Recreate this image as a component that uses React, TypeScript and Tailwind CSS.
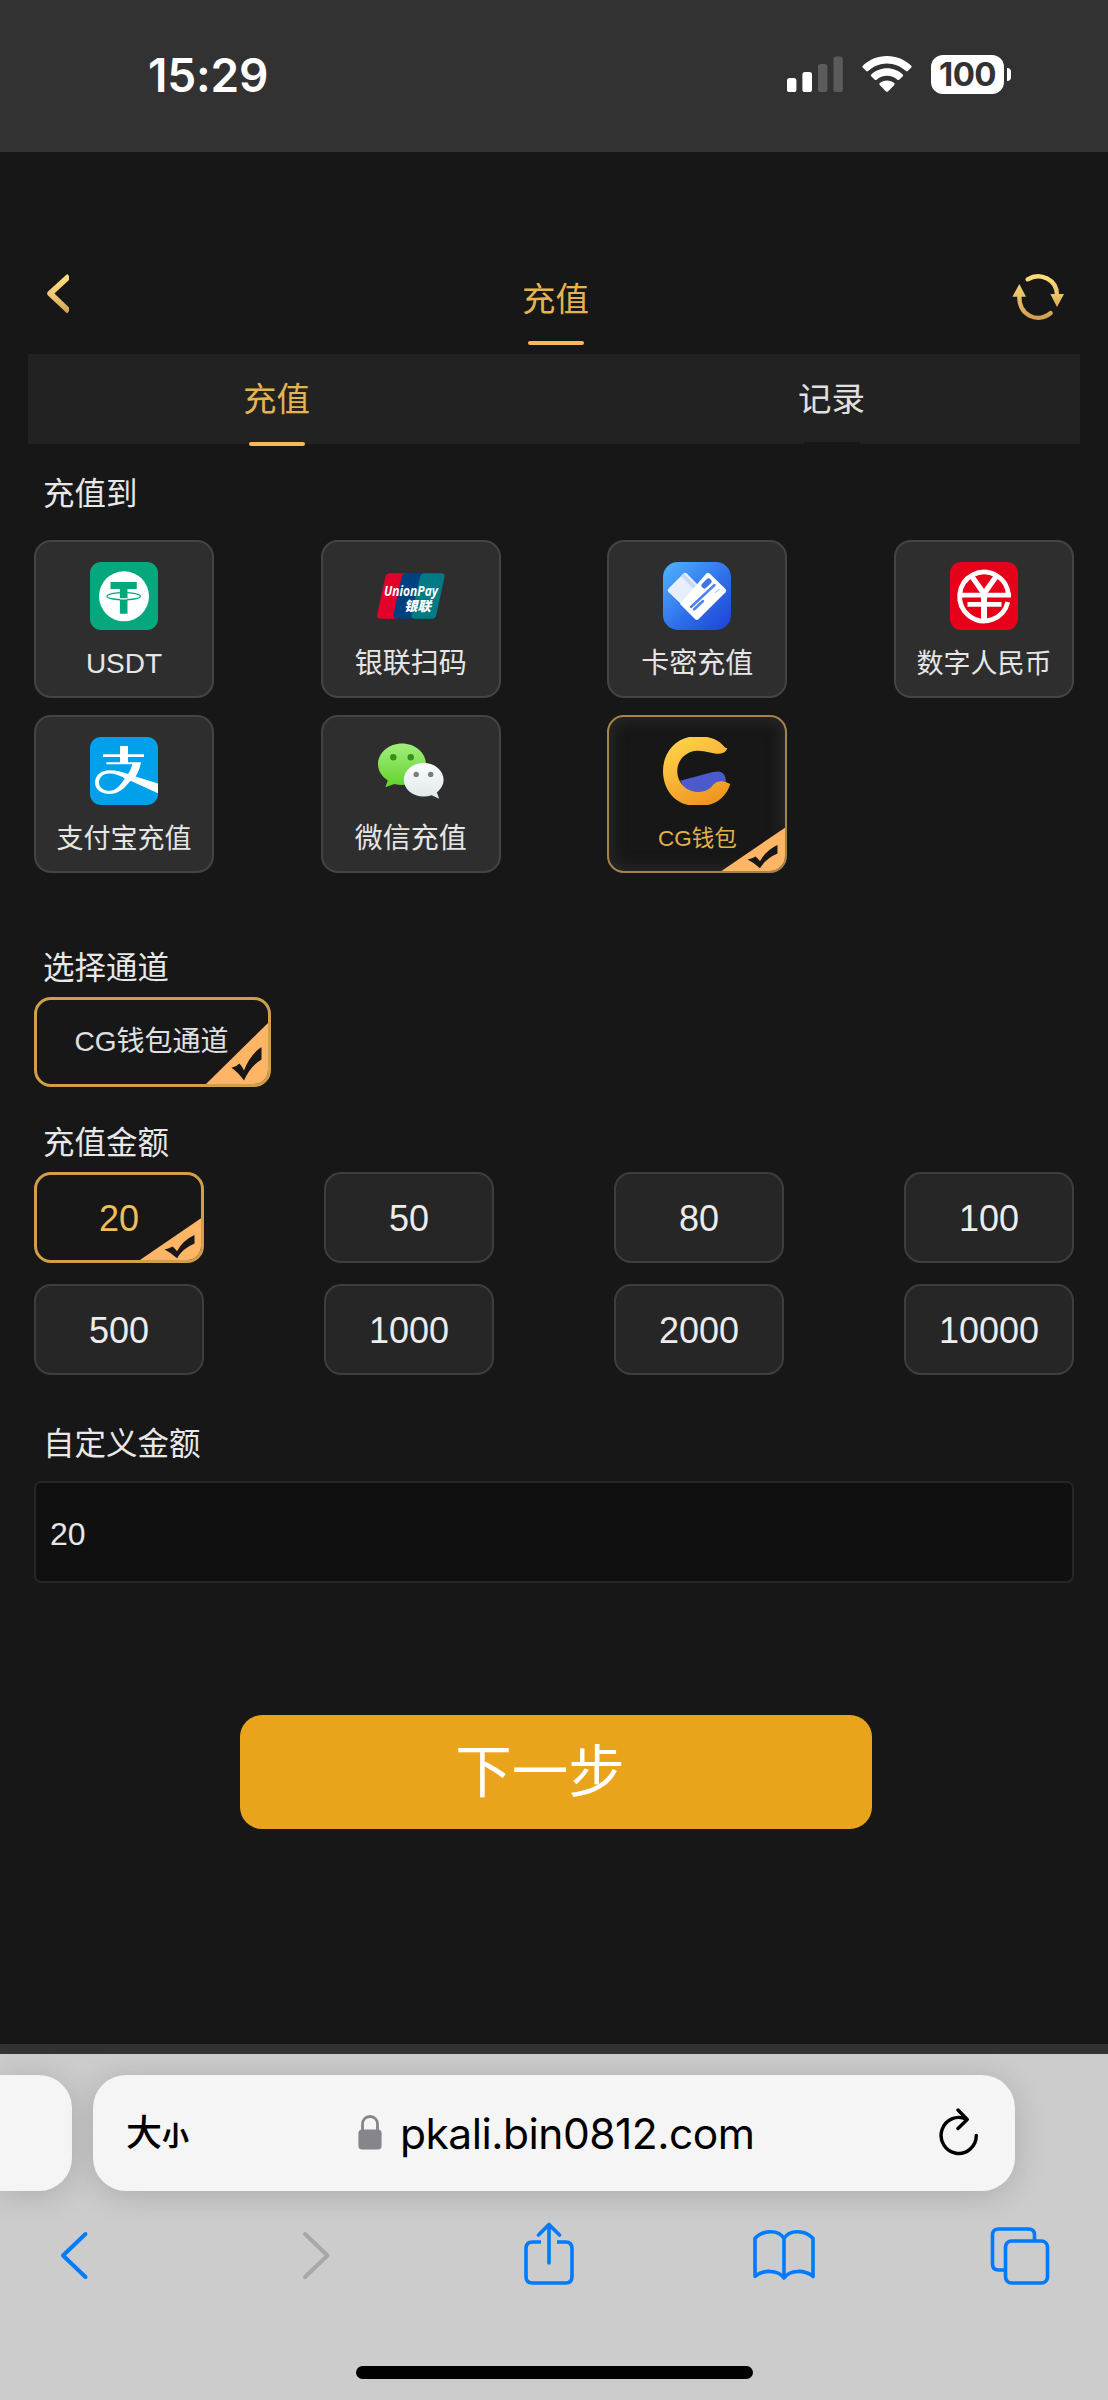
import type { ReactNode } from "react";

function SignalIcon() {
  return (
    <svg width="56" height="36" viewBox="0 0 56 36">
      <rect x="0" y="22" width="9.4" height="14" rx="2.6" fill="#fff" />
      <rect x="15.4" y="16" width="9.6" height="20" rx="2.6" fill="#fff" />
      <rect x="31" y="8" width="9.4" height="28" rx="2.6" fill="#5b5b5b" />
      <rect x="46.4" y="0.5" width="9.4" height="35.5" rx="2.6" fill="#5b5b5b" />
    </svg>
  );
}

function WifiIcon() {
  return (
    <svg width="50" height="36" viewBox="0 0 50 36" fill="#fff">
      <path d="M25 0C34.500 0 43 3.700 49.200 9.700c.6.6.6 1.200.1 1.800l-3.500 3.500c-.6.6-1.300.6-1.900 0C38.800 10.200 32.200 7.400 25 7.400S11.200 10.200 6.100 15c-.6.6-1.300.6-1.900 0L.7 11.500c-.5-.6-.5-1.200.1-1.800C7 3.700 15.500 0 25 0z" />
      <path d="M25 12.300c6 0 11.500 2.300 15.700 6.100.6.600.6 1.300.1 1.800l-3.600 3.500c-.6.6-1.200.5-1.800 0-2.800-2.500-6.400-4-10.400-4s-7.600 1.500-10.400 4c-.6.5-1.200.6-1.800 0l-3.600-3.500c-.5-.5-.5-1.200.1-1.800C13.500 14.600 19 12.300 25 12.300z" />
      <path d="M25 24.500c2.800 0 5.300 1 7.200 2.600.6.500.6 1.200.1 1.800l-6.300 6.500c-.6.600-1.400.6-2 0l-6.300-6.500c-.5-.6-.5-1.300.1-1.800 1.900-1.600 4.400-2.600 7.200-2.600z" />
    </svg>
  );
}

function StatusBar() {
  return (
    <div className="flex h-[152px] justify-between bg-[#323232] pl-[148px] pr-[97px] font-['Inter',sans-serif]">
      <span className="pt-[45px] text-[46px] font-semibold leading-[60px] tracking-[-0.2px] text-white">15:29</span>
      <div className="flex pt-[55px]">
        <div className="pt-[1px]"><SignalIcon /></div>
        <div className="ml-[19px] pt-[1px]"><WifiIcon /></div>
        <div className="ml-[19px] flex h-[39px] w-[73px] items-center justify-center rounded-[12px] bg-white text-[33px] font-bold tracking-[-0.6px] text-[#323232]">100</div>
        <div className="ml-[3px] mt-[13px] h-[13px] w-[4px] rounded-r-full bg-white" />
      </div>
    </div>
  );
}

function GoldGradient({ id }: { id: string }) {
  return (
    <linearGradient id={id} x1="0" y1="0" x2="0" y2="1">
      <stop offset="0" stopColor="#ffe07c" />
      <stop offset="0.55" stopColor="#efc774" />
      <stop offset="1" stopColor="#d19f4d" />
    </linearGradient>
  );
}

function BackIcon() {
  return (
    <svg width="24" height="40" viewBox="0 0 24 40">
      <defs><GoldGradient id="back" /></defs>
      <path d="M20.200 0 22 2v4L7.400 19.500 22 33.500V37l-1.800 2.500L1 21.400c-1.200-1.200-1.200-2.600 0-3.800z" fill="url(#back)" />
    </svg>
  );
}

function RefreshIcon() {
  return (
    <svg width="52" height="48" viewBox="36 32 156 144">
      <defs>
        <linearGradient id="refresh" gradientUnits="userSpaceOnUse" x1="0" y1="34" x2="0" y2="176">
          <stop offset="0" stopColor="#ffe07c" />
          <stop offset="1" stopColor="#cf9c4d" />
        </linearGradient>
      </defs>
      <g fill="none" stroke="url(#refresh)" strokeWidth="13" strokeLinecap="round">
        <path d="M83 51C120 29 172 50 171 100" />
        <path d="M58 100C56 160 113 184 152 152" />
      </g>
      <path d="M151 95h41l-21 39zM37 103h41L58 65z" fill="url(#refresh)" />
    </svg>
  );
}

function UsdtIcon() {
  return (
    <svg width="68" height="68" viewBox="0 0 68 68">
      <rect width="68" height="68" rx="11" fill="#05a77c" />
      <circle cx="34" cy="34.300" r="25" fill="#fff" />
      <path d="M20.500 20h26.300v7H37.500v24.700h-7.600V27h-9.400z" fill="#05a77c" />
      <ellipse cx="33.700" cy="34.200" rx="16.700" ry="3.600" fill="none" stroke="#05a77c" strokeWidth="1.300" />
      <path d="M29.900 36.600q3.800.5 7.600 0" stroke="#fff" strokeWidth="1.200" fill="none" />
    </svg>
  );
}

function UnionPayIcon() {
  return (
    <svg width="68" height="68" viewBox="0 0 68 68" fontFamily="'Open Sans','Noto Sans CJK SC',sans-serif">
      <path d="M12.500 11.300H30L20 56.700H3.200C1 56.700-.3 55 .2 52.800L8.300 15c.5-2.300 2-3.700 4.200-3.700z" fill="#e3002b" />
      <path d="M28.500 11.300H50L40 56.700H19.500c-2.300 0-3.600-1.600-3.100-3.900L24.500 15c.5-2.300 1.800-3.700 4-3.700z" fill="#00407f" />
      <path d="M47.500 11.300h17c2.300 0 3.500 1.500 3 3.700l-8.200 38c-.5 2.300-2 3.700-4.200 3.700H37.500c-2.300 0-3.600-1.600-3.100-3.900L43 15c.5-2.300 2.200-3.700 4.500-3.700z" fill="#007b85" />
      <text x="7" y="33.500" fontSize="14" fontWeight="700" fontStyle="italic" fill="#fff" textLength="54" lengthAdjust="spacingAndGlyphs">UnionPay</text>
      <text x="27" y="48.500" fontSize="13.500" fontWeight="900" fontStyle="italic" fill="#fff" textLength="27" lengthAdjust="spacingAndGlyphs">银联</text>
    </svg>
  );
}

function CardIcon() {
  return (
    <svg width="68" height="68" viewBox="0 0 68 68">
      <defs>
        <linearGradient id="card" x1="0" y1="0" x2="1" y2="1">
          <stop offset="0" stopColor="#52b4ff" />
          <stop offset="0.550" stopColor="#2f70e9" />
          <stop offset="1" stopColor="#1c40d8" />
        </linearGradient>
      </defs>
      <rect width="68" height="68" rx="15" fill="url(#card)" />
      <path d="M6 31 34 60l20-20-10-8z" fill="#1d50c8" opacity=".35" />
      <path d="M20.500 11.600q1.700-1.500 3.300 0L36 24 18 42 5.300 30q-1.500-1.600 0-3.200z" fill="#e6effb" />
      <path d="m18 14 15 15 2.500-2.500-15-15z" fill="#c4d8f6" />
      <path d="M43.300 11.600q1.700-1.500 3.300 0L62.500 27q1.500 1.500 0 3.200L35.500 57.200q-1.700 1.500-3.300 0L17 42z" fill="#fff" />
      <path d="m41.500 23.500 4-4" stroke="#3f74e8" strokeWidth="6" strokeLinecap="round" />
      <path d="m28 45 23.500-22" stroke="#4f84ef" strokeWidth="2.500" strokeLinecap="round" />
      <path d="m31 47.500 9-8.500" stroke="#4f84ef" strokeWidth="2.500" strokeLinecap="round" />
      <path d="m52 31 4.500-4" stroke="#b9d0f7" strokeWidth="1.500" />
    </svg>
  );
}

function YuanIcon() {
  return (
    <svg width="68" height="68" viewBox="0 0 68 68">
      <rect width="68" height="68" rx="11" fill="#e60019" />
      <g fill="none" stroke="#fff" strokeWidth="4.800">
        <path d="M61 33.200H10.500" />
        <path d="M58.400 33.200A24.400 24.400 0 1 0 57.800 40" />
        <path d="M17.500 42.400h34" />
        <path d="M34 31v28" strokeWidth="6" />
        <path d="m21.500 14 12.500 17.500L46.500 14" strokeWidth="5.400" />
      </g>
    </svg>
  );
}

function AlipayIcon() {
  return (
    <svg width="68" height="68" viewBox="0 0 68 68">
      <defs><clipPath id="ali"><rect width="68" height="68" rx="11" /></clipPath></defs>
      <g clipPath="url(#ali)">
        <rect width="68" height="68" fill="#00a1ea" />
        <path d="M13 17.300h17V9h8v8.300h16V20H38v5.200h13C50 31 48 35.500 45.600 39.500L68 46.500v9.800L40.500 43.700C34.500 51.500 28 57 20 57 11.500 57 5 52.500 5 45.500c0-7 6-12.300 14.500-12.300 6.500 0 12 1.500 18.500 3.900 2-3 3.400-6 4.200-9.800H16.300v-2.100H30V20H13z" fill="#fff" />
        <path d="M34.800 41.200C29 38 24 36.300 19 36.400 13 36.500 9 40.500 9 45.500c0 5 4.500 8.300 10.500 8.300 6 0 11-5.300 15.300-12.600z" fill="#00a1ea" />
      </g>
    </svg>
  );
}

function WechatIcon() {
  return (
    <svg width="68" height="68" viewBox="0 0 68 68">
      <defs>
        <linearGradient id="wxGreen" x1="0" y1="0" x2="0" y2="1">
          <stop offset="0" stopColor="#a3ee7c" />
          <stop offset="1" stopColor="#61d32b" />
        </linearGradient>
        <linearGradient id="wxWhite" x1="0" y1="0" x2="0" y2="1">
          <stop offset="0" stopColor="#fdfefe" />
          <stop offset="1" stopColor="#dfe6e8" />
        </linearGradient>
      </defs>
      <path d="M25 6.500c13.300 0 24 9.300 24 20.800S38.300 48 25 48c-2.600 0-5.200-.3-7.500-1L8.300 50.300 10.800 43.500C4.800 39.500 1 33.700 1 27.300 1 15.800 11.700 6.500 25 6.500z" fill="url(#wxGreen)" />
      <circle cx="16.300" cy="20.300" r="3.200" fill="#35901c" />
      <circle cx="33.700" cy="20.300" r="3.200" fill="#35901c" />
      <path d="M46.700 26C57.700 26 66.600 33.500 66.600 42.800c0 5-2.600 9.500-6.700 12.600l2.300 6.300-7.500-3.500a24 24 0 0 1-8 1.400c-11 0-19.900-7.500-19.900-16.800S35.700 26 46.700 26z" fill="url(#wxWhite)" />
      <circle cx="39.200" cy="37.400" r="2.700" fill="#728086" />
      <circle cx="53.700" cy="37.400" r="2.700" fill="#728086" />
    </svg>
  );
}

function CgIcon() {
  return (
    <svg width="68" height="68" viewBox="0 0 68 68">
      <defs>
        <linearGradient id="cg" x1="0.200" y1="0" x2="0.700" y2="1">
          <stop offset="0" stopColor="#ffd34b" />
          <stop offset="0.500" stopColor="#f8b537" />
          <stop offset="1" stopColor="#ee931f" />
        </linearGradient>
      </defs>
      <path d="M17 43.700 50 35C57 33.300 61 35.500 62 39.500c.6 2.500 1 4.500.6 7L50 58H26z" fill="#4d5acb" />
      <path d="M26 0h18c8 1.500 14 5.300 17 9.500q1.500 1.700 3.300 1.500c-1.200 4-4 5.500-8.300 5.700C48 16.700 43 13.500 34.500 13.700 23 14 14.300 23 14.300 34c0 11.500 9 21 21 21 8.500 0 12.200-4 15.200-7.500 4-4.500 10.500-4.300 16.800-.5C64 58 55 66 45 68H25.500C10 65 0 51 0 34 0 17 10.500 3.500 26 0z" fill="url(#cg)" />
    </svg>
  );
}

function CornerCheck({ className }: { className: string }) {
  return (
    <svg className={`absolute ${className}`} viewBox="0 0 66 66" preserveAspectRatio="none">
      <path d="M66 0v66H0z" fill="#ffb566" />
      <path d="M27.500 47.500q5-1 8-4.300 2.500 3 4.500 7Q46 34 57.500 26.500V39Q46 46 40 60.500 34 52 27.500 47.500z" fill="#171717" />
    </svg>
  );
}

const methods = [
  { label: "USDT", icon: <UsdtIcon />, size: "text-[28px]" },
  { label: "银联扫码", icon: <UnionPayIcon />, size: "text-[28px]" },
  { label: "卡密充值", icon: <CardIcon />, size: "text-[28px]" },
  { label: "数字人民币", icon: <YuanIcon />, size: "text-[27px]" },
  { label: "支付宝充值", icon: <AlipayIcon />, size: "text-[27px]" },
  { label: "微信充值", icon: <WechatIcon />, size: "text-[28px]" },
  { label: "CG钱包", icon: <CgIcon />, size: "text-[22.500px]", active: true },
];

const amounts = [20, 50, 80, 100, 500, 1000, 2000, 10000];

function SectionTitle({ className, children }: { className: string; children: ReactNode }) {
  return <h2 className={`pl-[9px] pt-[1px] text-[31.500px] leading-[44px] text-[#e8e8e8] ${className}`}>{children}</h2>;
}

function Deposit() {
  return (
    <main className="flex h-[1892px] flex-col bg-[#171717]">
      <header className="flex h-[202px] justify-between pl-[47px] pr-[44px] pt-[121px]">
        <div className="w-[52px] pt-[1px]"><BackIcon /></div>
        <div className="flex flex-col items-center">
          <h1 className="pt-[2px] text-[33.500px] leading-[50px] text-[#e5b44f]">充值</h1>
          <div className="mt-[16px] h-[4px] w-[56px] rounded-sm bg-[#f5b955]" />
        </div>
        <RefreshIcon />
      </header>

      <nav className="mx-[28px] flex h-[90px] justify-between bg-[#222222] px-[215px] text-[33.500px] leading-[50px]">
        <div className="flex flex-col items-center text-[#e5b44f]">
          <span className="mt-[21px] h-[50px]">充值</span>
          <div className="mt-[17px] h-[4px] w-[56px] shrink-0 rounded-sm bg-[#f5b955]" />
        </div>
        <div className="flex flex-col items-center text-[#e0e0e0]">
          <span className="mt-[21px] h-[50px]">记录</span>
          <div className="mt-[17px] h-[2px] w-[56px] shrink-0 bg-[#171717]" />
        </div>
      </nav>

      <div className="px-[34px]">
        <SectionTitle className="mt-[27px]">充值到</SectionTitle>
        <div className="mt-[24px] grid grid-cols-[repeat(4,180px)] justify-between gap-y-[17px]">
          {methods.map((m) => (
            <div
              key={m.label}
              className={
                m.active
                  ? "relative flex h-[158px] flex-col items-center overflow-hidden rounded-[17px] border-2 border-[#a68348] pt-[20px] text-[#e0b04e] shadow-[inset_0_0_14px_4px_#282828]"
                  : "flex h-[158px] flex-col items-center rounded-[17px] border-2 border-[#444444] bg-[#2e2e2e] pt-[20px] text-[#e6e6e6]"
              }
            >
              {m.icon}
              <span className={`mt-[14px] whitespace-nowrap leading-[40px] ${m.size}`}>{m.label}</span>
              {m.active && <CornerCheck className="-bottom-px -right-px h-[45px] w-[66px]" />}
            </div>
          ))}
        </div>

        <SectionTitle className="mt-[72px]">选择通道</SectionTitle>
        <div className="relative mt-[7px] flex h-[90px] w-[237px] items-center justify-center overflow-hidden rounded-[17px] border-[3px] border-[#d09f48] text-[28px] text-[#e0e0e0]">
          <span className="pb-[1px] pr-[2px]">CG钱包通道</span>
          <CornerCheck className="-bottom-[2px] -right-[2px] h-[65px] w-[66px]" />
        </div>

        <SectionTitle className="mt-[33px]">充值金额</SectionTitle>
        <div className="mt-[7px] grid grid-cols-[repeat(4,170px)] justify-between gap-y-[21px]">
          {amounts.map((n) => (
            <div
              key={n}
              className={
                n === 20
                  ? "relative flex h-[91px] items-center justify-center overflow-hidden rounded-[17px] border-[3px] border-[#d09f48] pt-[2px] text-[36px] text-[#f0bf58]"
                  : "flex h-[91px] items-center justify-center rounded-[17px] border-2 border-[#3e3e3e] bg-[#262626] pt-[2px] text-[36px] text-[#ececec]"
              }
            >
              {n}
              {n === 20 && <CornerCheck className="-bottom-[2px] -right-[2px] h-[45px] w-[66px]" />}
            </div>
          ))}
        </div>

        <SectionTitle className="mt-[46px]">自定义金额</SectionTitle>
        <div className="mt-[15px] flex h-[102px] items-center rounded-[7px] border-2 border-[#262626] bg-[#101010] pl-[14px] pt-[3px] text-[32px] text-[#e6e6e6]">20</div>
      </div>

      <button className="ml-[240px] mt-[132px] h-[114px] w-[632px] rounded-[22px] bg-[#eaa41c] pr-[32px] pt-[3px] text-[56.500px] text-white">下一步</button>
    </main>
  );
}

function LockIcon() {
  return (
    <svg width="24" height="36" viewBox="0 0 24 36">
      <path d="M4.500 16V9.500C4.500 4.500 7.500 1.500 12 1.500s7.500 3 7.500 8V16" fill="none" stroke="#86858b" strokeWidth="2.800" />
      <rect x="0.400" y="14.500" width="23.200" height="20" rx="3.800" fill="#86858b" />
    </svg>
  );
}

function ReloadIcon() {
  return (
    <svg width="40" height="48" viewBox="0 0 40 48" fill="none" stroke="#000" strokeWidth="3.400" strokeLinecap="round" strokeLinejoin="round">
      <path d="M37.300 27.500A17.600 18 0 1 1 27.500 11.300" />
      <path d="m19 2 9.200 9.500L19 20.500" />
    </svg>
  );
}

function BrowserBar() {
  return (
    <footer className="h-[346px] overflow-hidden bg-[#cccccc] font-['Inter','Noto_Sans_CJK_SC',sans-serif]">
      <div className="flex pt-[21px]">
        <div className="h-[116px] w-[72px] rounded-r-[33px] bg-[#f5f5f5] shadow-[0_4px_32px_rgba(0,0,0,0.16)]" />
        <div className="ml-[21px] flex h-[116px] w-[922px] items-center rounded-[33px] bg-[#f5f5f5] pl-[33px] pr-[36px] shadow-[0_4px_32px_rgba(0,0,0,0.16)]">
          <div className="flex w-[64px] items-baseline text-black">
            <span className="text-[36px] font-medium">大</span>
            <span className="text-[27px] font-bold">小</span>
          </div>
          <div className="ml-[168px]"><LockIcon /></div>
          <span className="ml-[18px] pt-[2px] text-[42.500px] tracking-[-0.5px] text-black">pkali.bin0812.com</span>
          <div className="ml-auto pb-[2px]"><ReloadIcon /></div>
        </div>
      </div>
      <div className="flex pl-[59px] pt-[31px]">
        <svg width="32" height="64" viewBox="0 0 32 64" fill="none" stroke="#007aff" strokeWidth="4" strokeLinecap="round" strokeLinejoin="round">
          <path d="M26.500 12 4 33.500 26.500 55" />
        </svg>
        <svg className="ml-[210px]" width="32" height="64" viewBox="0 0 32 64" fill="none" stroke="#a8a8a8" strokeWidth="4" strokeLinecap="round" strokeLinejoin="round">
          <path d="m4 12 22.500 21.500L4 55" />
        </svg>
        <svg className="ml-[191px]" width="50" height="64" viewBox="0 0 50 64" fill="none" stroke="#007aff" strokeWidth="3.600" strokeLinejoin="round">
          <path d="M17 20H8.500Q2 20 2 26.500v28Q2 61 8.500 61h33q6.500 0 6.500-6.500v-28Q48 20 41.500 20H33" />
          <path d="M25 41V3M14.500 13 25 2.500 35.500 13" strokeLinecap="round" />
        </svg>
        <svg className="ml-[179px]" width="62" height="64" viewBox="0 0 62 64" fill="none" stroke="#007aff" strokeWidth="3.600" strokeLinecap="round" strokeLinejoin="round">
          <path d="M31 16.500C26 7.500 10 7.500 2 16.500v38c8-7 23-7 29 1.500 6-8.500 21-8.500 29-1.500v-38c-8-9-24-9-29 0zV56" />
        </svg>
        <svg className="ml-[175px]" width="60" height="64" viewBox="0 0 60 64" fill="none" stroke="#007aff" strokeWidth="3.600">
          <path d="M44.500 19v-6q0-6-6-6H8.500q-6 0-6 6v29q0 6 6 6H15" />
          <rect x="15.500" y="19" width="42" height="42" rx="6" />
        </svg>
      </div>
      <div className="mx-auto mt-[80px] h-[13px] w-[397px] rounded-full bg-black" />
    </footer>
  );
}

export default function App() {
  return (
    <div className="w-[1108px] font-['Liberation_Sans','Noto_Sans_CJK_SC',sans-serif]">
      <StatusBar />
      <Deposit />
      <div className="h-[10px] bg-[#323232]" />
      <BrowserBar />
    </div>
  );
}
